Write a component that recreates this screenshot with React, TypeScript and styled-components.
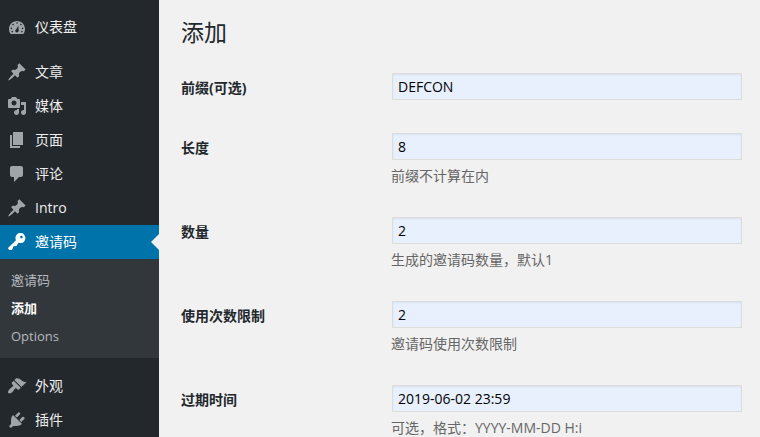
import React from "react";
import styled, { createGlobalStyle } from "styled-components";

const GlobalStyle = createGlobalStyle`
  *, *::before, *::after { box-sizing: border-box; }
  html, body { margin: 0; background: #f1f1f1; }
  body, input {
    font-family: "Open Sans", "Noto Sans CJK SC", sans-serif;
    font-size: 14px;
  }
  h1, p, ul { margin: 0; padding: 0; }
`;

const Page = styled.div`
  display: flex;
  min-height: 100vh;
  overflow: hidden;
`;

const Sidebar = styled.nav`
  flex: 0 0 159px;
  padding-top: 10px;
  background: #23282d;
`;

const MenuList = styled.ul`
  list-style: none;
`;

const MenuItem = styled.li<{ $spaced?: boolean }>`
  margin-top: ${(p) => (p.$spaced ? 11 : 0)}px;
`;

const MenuLink = styled.a<{ $current?: boolean }>`
  position: relative;
  display: flex;
  align-items: flex-start;
  gap: 8px;
  height: 34px;
  padding: 7px 0 0 7px;
  line-height: 20px;
  color: ${(p) => (p.$current ? "#fff" : "#eee")};
  background: ${(p) => (p.$current ? "#0073aa" : "transparent")};
  text-decoration: none;

  &::after {
    content: "";
    display: ${(p) => (p.$current ? "block" : "none")};
    position: absolute;
    right: 0;
    top: 9px;
    border: 8px solid transparent;
    border-left-width: 0;
    border-right-color: #f1f1f1;
  }
`;

const MenuIcon = styled.svg<{ $current?: boolean }>`
  flex: none;
  width: 20px;
  height: 20px;
  fill: ${(p) => (p.$current ? "#fff" : "#a0a5aa")};
`;

const SubMenu = styled.ul`
  list-style: none;
  padding: 7px 0 8px;
  background: #32373c;
`;

const SubLink = styled.a<{ $current?: boolean }>`
  display: block;
  padding: 0 11px;
  font-size: 13px;
  line-height: 28px;
  font-weight: ${(p) => (p.$current ? 700 : 400)};
  color: ${(p) => (p.$current ? "#fff" : "#b4b9be")};
  text-decoration: none;
`;

const Content = styled.main`
  flex: 1;
  min-width: 0;
  padding: 15px 18px 0 22px;
`;

const Title = styled.h1`
  font-size: 23px;
  font-weight: 400;
  line-height: 34px;
  color: #23282d;
`;

const Form = styled.form`
  display: grid;
  gap: 33px;
  margin-top: 24px;
`;

const Field = styled.div`
  display: grid;
  grid-template-columns: 210px 1fr;
  align-items: start;
`;

const Label = styled.label`
  padding-top: 5px;
  line-height: 20px;
  font-weight: 700;
  color: #23282d;
`;

const Control = styled.div`
  display: flex;
  flex-direction: column;
`;

const TextInput = styled.input`
  height: 27px;
  margin: 0 0 0 1px;
  padding: 0 5px;
  border: 1px solid #ddd;
  border-radius: 0;
  background: #e8f0fe;
  box-shadow: inset 0 1px 2px rgba(0, 0, 0, 0.07);
  color: #000;
`;

const Description = styled.p`
  margin-top: 8px;
  line-height: 16px;
  color: #666;
`;

const icons = {
  dashboard:
    "M3.76 17h12.48C17.34 15.63 18 13.89 18 12c0-4.42-3.58-8-8-8s-8 3.58-8 8c0 1.89.66 3.63 1.76 5zM10 5.2a.8.8 0 1 1 0 1.6.8.8 0 0 1 0-1.6zM6 6.8a.8.8 0 1 1 0 1.6.8.8 0 0 1 0-1.6zm8 0a.8.8 0 1 1 0 1.6.8.8 0 0 1 0-1.6zM4.4 10.6a.8.8 0 1 1 0 1.6.8.8 0 0 1 0-1.6zm11.2 0a.8.8 0 1 1 0 1.6.8.8 0 0 1 0-1.6zM11.3 8.4l.4 5.4c0 .9-.8 1.7-1.7 1.7s-1.7-.8-1.7-1.7c0-.7.5-1.3 1.1-1.6zM5.2 13.8a.8.8 0 1 1 0 1.6.8.8 0 0 1 0-1.6zm9.6 0a.8.8 0 1 1 0 1.6.8.8 0 0 1 0-1.6z",
  pin: "M10.44 3.02l1.82-1.82 6.36 6.35-1.83 1.82c-1.05-.68-2.48-.57-3.41.36l-.75.75c-.92.93-1.04 2.35-.35 3.41l-1.83 1.82-2.41-2.41-2.8 2.79c-.42.42-3.38 2.71-3.8 2.29s1.86-3.39 2.28-3.81l2.79-2.79L4.1 9.36l1.83-1.82c1.05.69 2.48.57 3.4-.36l.75-.75c.93-.92 1.05-2.35.36-3.41z",
  media:
    "M13 11V4c0-.55-.45-1-1-1h-1.67L9 1H5L3.67 3H2c-.55 0-1 .45-1 1v7c0 .55.45 1 1 1h10c.55 0 1-.45 1-1zM7 4.5c1.38 0 2.5 1.12 2.5 2.5S8.38 9.5 7 9.5 4.5 8.38 4.5 7 5.62 4.5 7 4.5zM14 6h5v10.5c0 1.38-1.12 2.5-2.5 2.5S14 17.88 14 16.5s1.12-2.5 2.5-2.5c.17 0 .34.02.5.05V9h-3V6zm-4 8.05V13h2v3.5c0 1.38-1.12 2.5-2.5 2.5S7 17.88 7 16.5 8.12 14 9.5 14c.17 0 .34.02.5.05z",
  page: "M6 15V2h10v13H6zm-1 1h8v2H3V5h2v11z",
  comment:
    "M5 2h9c1.1 0 2 .9 2 2v7c0 1.1-.9 2-2 2h-2l-5 5v-5H5c-1.1 0-2-.9-2-2V4c0-1.1.9-2 2-2z",
  key: "M16.95 2.58c1.96 1.95 1.96 5.12 0 7.07-1.51 1.51-3.75 1.84-5.59 1.01l-1.87 3.31-2.99.31L5 18H2l-1-2 7.95-7.69c-.92-1.87-.62-4.18.93-5.73 1.95-1.96 5.12-1.96 7.07 0zm-2.51 3.79c.74 0 1.33-.6 1.33-1.34 0-.73-.59-1.33-1.33-1.33-.73 0-1.33.6-1.33 1.33 0 .74.6 1.34 1.33 1.34z",
  brush:
    "M14.48 11.06L7.41 3.99l1.5-1.5c.5-.56 2.3-.47 3.51.32 1.21.8 1.43 1.28 2.91 2.1 1.18.64 2.45 1.26 4.45.85zm-.71.71L6.7 4.7 4.93 6.47c-.39.39-.39 1.02 0 1.41l1.06 1.06c.39.39.39 1.03 0 1.42-.6.6-1.43 1.11-2.21 1.69-.35.26-.7.53-1.01.84C1.43 14.23.4 16.08 1.4 17.07c.99 1 2.84-.03 4.18-1.36.31-.31.58-.66.85-1.02.57-.78 1.08-1.61 1.69-2.21.39-.39 1.02-.39 1.41 0l1.06 1.06c.39.39 1.02.39 1.41 0z",
  plug: "M13.11 4.36L9.87 7.6 8 5.73l3.24-3.24c.35-.34 1.05-.2 1.56.32.52.51.66 1.21.31 1.55zm-8 1.77l.91-1.12 9.01 9.01-1.19.84c-.71.71-2.63 1.16-3.82 1.16H6.14L4.9 17.26c-.59.59-1.54.59-2.12 0-.59-.58-.59-1.53 0-2.12l1.24-1.24v-3.88c0-1.13.4-3.19 1.09-3.89zm7.26 3.97l3.24-3.24c.34-.35 1.04-.21 1.55.31.52.51.66 1.21.31 1.55l-3.24 3.25z",
};

type Entry = {
  label: string;
  icon: keyof typeof icons;
  spaced?: boolean;
  children?: string[];
};

const menu: Entry[] = [
  { label: "仪表盘", icon: "dashboard" },
  { label: "文章", icon: "pin", spaced: true },
  { label: "媒体", icon: "media" },
  { label: "页面", icon: "page" },
  { label: "评论", icon: "comment" },
  { label: "Intro", icon: "pin" },
  { label: "邀请码", icon: "key", children: ["邀请码", "添加", "Options"] },
  { label: "外观", icon: "brush", spaced: true },
  { label: "插件", icon: "plug" },
];

const fields = [
  { id: "prefix", label: "前缀(可选)", value: "DEFCON" },
  { id: "length", label: "长度", value: "8", help: "前缀不计算在内" },
  { id: "amount", label: "数量", value: "2", help: "生成的邀请码数量，默认1" },
  { id: "limit", label: "使用次数限制", value: "2", help: "邀请码使用次数限制" },
  { id: "expires", label: "过期时间", value: "2019-06-02 23:59", help: "可选，格式：YYYY-MM-DD H:i" },
];

export default function App() {
  return (
    <Page lang="zh-CN">
      <GlobalStyle />
      <Sidebar>
        <MenuList>
          {menu.map((item) => {
            const current = Boolean(item.children);
            return (
              <MenuItem key={item.label} $spaced={item.spaced}>
                <MenuLink href="#" $current={current}>
                  <MenuIcon viewBox="0 0 20 20" aria-hidden="true" $current={current}>
                    <path fillRule="evenodd" d={icons[item.icon]} />
                  </MenuIcon>
                  {item.label}
                </MenuLink>
                {item.children && (
                  <SubMenu>
                    {item.children.map((child) => (
                      <li key={child}>
                        <SubLink href="#" $current={child === "添加"}>
                          {child}
                        </SubLink>
                      </li>
                    ))}
                  </SubMenu>
                )}
              </MenuItem>
            );
          })}
        </MenuList>
      </Sidebar>
      <Content>
        <Title>添加</Title>
        <Form>
          {fields.map((f) => (
            <Field key={f.id}>
              <Label htmlFor={f.id}>{f.label}</Label>
              <Control>
                <TextInput
                  id={f.id}
                  type="text"
                  defaultValue={f.value}
                  aria-describedby={f.help ? `${f.id}-help` : undefined}
                />
                {f.help && <Description id={`${f.id}-help`}>{f.help}</Description>}
              </Control>
            </Field>
          ))}
        </Form>
      </Content>
    </Page>
  );
}
